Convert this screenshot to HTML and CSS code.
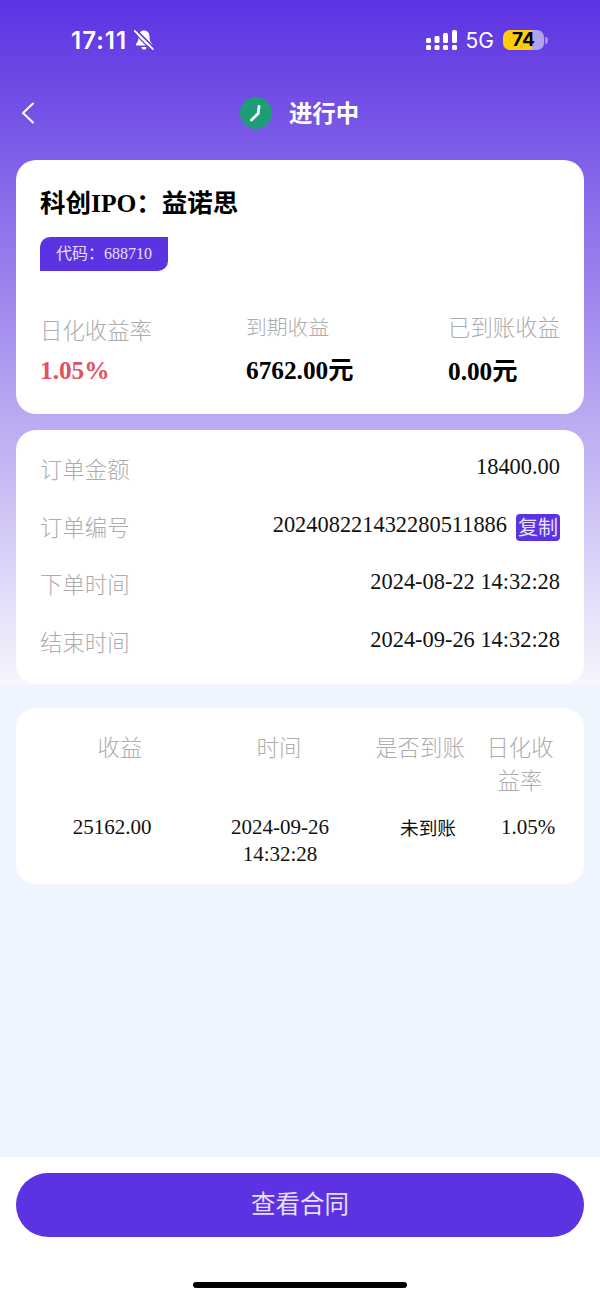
FILE: index.html
```html
<!DOCTYPE html>
<html>

<head>
  <meta charset="utf-8">
  <link rel="stylesheet" href="styles.css">
</head>

<body>
  <div class="page">
    <div class="top">
      <div class="status">
        <div class="status-left">
          <span class="time">17:11</span>
          <svg class="bell" width="20" height="22" viewBox="0 0 20 22">
            <path d="M10 1.500c-3.500 0-5.500 2.600-5.500 6 0 3.600-.8 5.600-2.500 7.500-.5.600-.2 1.500.7 1.500h14.600c.9 0 1.200-.9.700-1.500-1.700-1.900-2.500-3.900-2.500-7.500 0-3.400-2-6-5.500-6z" fill="#fff" />
            <path d="M7.500 18h5c0 1.600-1.100 2.600-2.500 2.600S7.500 19.600 7.500 18z" fill="#fff" />
            <path d="M1.800 .8l18 18" stroke="#5f38e0" stroke-width="2" />
            <path d="M.8 2l18 18" stroke="#fff" stroke-width="1.800" stroke-linecap="round" />
            <path d="M-.5 3.500l18 18" stroke="#5f38e0" stroke-width="1.200" />
          </svg>
        </div>
        <div class="status-right">
          <svg class="signal" width="31" height="20" viewBox="0 0 31 20" fill="#fff">
            <rect x="0" y="8" width="5" height="5" rx="1.500" />
            <rect x="8.500" y="6" width="5" height="7" rx="1.500" />
            <rect x="17" y="3" width="5" height="10" rx="1.500" />
            <rect x="26" y="0" width="5" height="13" rx="1.500" />
            <rect x="0" y="15" width="5" height="5" rx="1.500" />
            <rect x="8.500" y="15" width="5" height="5" rx="1.500" />
            <rect x="17" y="15" width="5" height="5" rx="1.500" />
            <rect x="26" y="15" width="5" height="5" rx="1.500" />
          </svg>
          <span class="net">5G</span>
          <div class="battery">74</div>
          <div class="battery-tip"></div>
        </div>
      </div>

      <div class="nav">
        <svg class="back" width="14" height="22" viewBox="0 0 14 22">
          <path d="M12 1.500L2 11l10 9.500" fill="none" stroke="#fff" stroke-width="2" stroke-linecap="round" stroke-linejoin="round" />
        </svg>
        <div class="nav-title">
          <svg width="32" height="32" viewBox="0 0 32 32">
            <circle cx="16" cy="16" r="16" fill="#1f9d77" />
            <path d="M19 9.500l-.8 7L11.500 23" fill="none" stroke="#fff" stroke-width="2.800" stroke-linecap="round" stroke-linejoin="round" />
          </svg>
          <span>进行中</span>
        </div>
      </div>

      <div class="card card-main">
        <h4 class="stock-name">科创IPO：益诺思</h4>
        <div class="stock-code">代码：688710</div>
        <div class="stats">
          <div class="stat stat-first">
            <div class="stat-label">日化收益率</div>
            <div class="stat-value red">1.05%</div>
          </div>
          <div class="stat stat-second">
            <div class="stat-label small">到期收益</div>
            <div class="stat-value">6762.00元</div>
          </div>
          <div class="stat stat-third">
            <div class="stat-label">已到账收益</div>
            <div class="stat-value">0.00元</div>
          </div>
        </div>
      </div>

      <div class="card card-info">
        <div class="info-row">
          <span class="info-label">订单金额</span>
          <span class="info-value">18400.00</span>
        </div>
        <div class="info-row">
          <span class="info-label">订单编号</span>
          <span class="info-value">202408221432280511886<span class="copy">复制</span></span>
        </div>
        <div class="info-row">
          <span class="info-label">下单时间</span>
          <span class="info-value">2024-08-22 14:32:28</span>
        </div>
        <div class="info-row">
          <span class="info-label">结束时间</span>
          <span class="info-value">2024-09-26 14:32:28</span>
        </div>
      </div>
    </div>

    <div class="card card-table">
      <div class="income-head">
        <div>收益</div>
        <div>时间</div>
        <div>是否到账</div>
        <div>日化收益率</div>
      </div>
      <div class="income-row">
        <div>25162.00</div>
        <div>2024-09-26<br>14:32:28</div>
        <div class="cjk">未到账</div>
        <div>1.05%</div>
      </div>
    </div>

    <div class="footer">
      <button class="contract">查看合同</button>
      <div class="home-bar"></div>
    </div>
  </div>
</body>

</html>
```

FILE: styles.css
```css
* {
  box-sizing: border-box;
}

body {
  margin: 0;
  font-family: "Liberation Serif", "Noto Sans CJK SC", serif;
}

.page {
  display: flex;
  flex-direction: column;
  height: 1300px;
  background: #eef5fe;
}

.top {
  height: 685px;
  padding: 0 16px;
  background: linear-gradient(180deg, #5c32e2 0%, #f6f6fc 100%);
}

/* status bar */
.status {
  display: flex;
  justify-content: space-between;
  align-items: center;
  height: 80px;
  padding: 0 36px 0 55px;
  color: #fff;
  font-family: Inter, "Liberation Sans", sans-serif;
}

.status-left,
.status-right {
  display: flex;
  align-items: center;
}

.time {
  font-size: 24px;
  font-weight: 600;
  letter-spacing: 1px;
}

.bell {
  margin-left: 7px;
}

.net {
  margin-left: 9px;
  font-size: 21px;
}

.battery {
  width: 41px;
  height: 20px;
  margin-left: 9px;
  border-radius: 7px;
  background: linear-gradient(90deg, #fdcd0a 0 29px, #b3a2ee 29px);
  color: #000;
  font-size: 19px;
  font-weight: 700;
  line-height: 20px;
  text-align: center;
}

.battery-tip {
  width: 3px;
  height: 7px;
  margin-left: 1px;
  border-radius: 0 3px 3px 0;
  background: #a893ec;
}

/* nav */
.nav {
  display: flex;
  align-items: center;
  position: relative;
  justify-content: center;
  height: 66px;
  color: #fff;
}

.back {
  position: absolute;
  left: 5px;
  top: 22px;
}

.nav-title {
  display: flex;
  align-items: center;
  gap: 17px;
  margin-right: 1px;
  font-family: "Noto Sans CJK SC", sans-serif;
  font-size: 23.400px;
  font-weight: 700;
}

.nav-title span {
  padding-bottom: 2px;
}

/* cards */
.card {
  border-radius: 20px;
  background: #fff;
}

.card-main {
  height: 254px;
  margin-top: 14px;
  padding: 25px 24px 0;
}

.stock-name {
  margin: 0;
  font-size: 25.500px;
  font-weight: 700;
  line-height: 38px;
  color: #000;
}

.stock-code {
  width: 128px;
  height: 34px;
  margin-top: 14px;
  padding-left: 16px;
  border-radius: 10px 0 10px 0;
  background: #5c32e2;
  color: #e6e0fb;
  font-size: 16px;
  line-height: 34px;
}

.stats {
  display: flex;
  margin-top: 39px;
}

.stat-first {
  width: 206px;
  padding-top: 3px;
}

.stat-second {
  width: 202px;
}

.stat-label {
  font-family: "Noto Sans CJK SC", sans-serif;
  font-size: 22.400px;
  font-weight: 300;
  line-height: 32px;
  color: #adadad;
}

.stat-label.small {
  font-size: 20.800px;
}

.stat-value {
  margin-top: 12px;
  font-size: 25.300px;
  font-weight: 700;
  line-height: 32px;
  color: #000;
}

.stat-first .stat-value {
  margin-top: 9px;
}

.stat-third .stat-value {
  margin-top: 13px;
}

.red {
  color: #e0525f;
}

.card-info {
  height: 254px;
  margin-top: 16px;
  padding: 11px 24px 0;
}

.info-row {
  display: flex;
  justify-content: space-between;
  height: 57.500px;
}

.info-label {
  font-family: "Noto Sans CJK SC", sans-serif;
  font-size: 22.400px;
  font-weight: 300;
  line-height: 54px;
  color: #adadad;
}

.info-value {
  display: flex;
  align-items: center;
  height: 52px;
  font-size: 22.400px;
  color: #111;
}

.copy {
  width: 44px;
  height: 27px;
  margin-left: 9px;
  margin-top: 6px;
  border-radius: 4px;
  background: #5c32e2;
  color: #e6e0fb;
  font-family: "Noto Sans CJK SC", sans-serif;
  font-size: 20px;
  line-height: 25px;
  text-align: center;
}

/* income table */
.card-table {
  height: 176px;
  margin: 23px 16px 0;
  padding: 22px 24px 0;
}

.income-head {
  display: grid;
  grid-template-columns: 160px 158px 124px 76px;
  font-family: "Noto Sans CJK SC", sans-serif;
  font-size: 22.400px;
  font-weight: 300;
  line-height: 33px;
  color: #adadad;
  text-align: center;
}

.income-row {
  display: grid;
  grid-template-columns: 144px 192px 104px 96px;
  margin-top: 18px;
  font-size: 21px;
  line-height: 26.500px;
  color: #111;
  text-align: center;
}

.income-row .cjk {
  font-family: "Noto Sans CJK SC", sans-serif;
  font-size: 18.700px;
}

/* footer */
.footer {
  display: flex;
  flex-direction: column;
  align-items: center;
  height: 143px;
  margin-top: auto;
  padding: 16px 16px 0;
  background: #fff;
}

.contract {
  width: 100%;
  height: 64px;
  padding-bottom: 6px;
  border: 0;
  border-radius: 32px;
  background: #5c32e2;
  color: #e6e0fb;
  font-family: "Noto Sans CJK SC", sans-serif;
  font-size: 24.500px;
}

.home-bar {
  width: 214px;
  height: 6px;
  margin-top: 45px;
  border-radius: 3px;
  background: #000;
}
```
